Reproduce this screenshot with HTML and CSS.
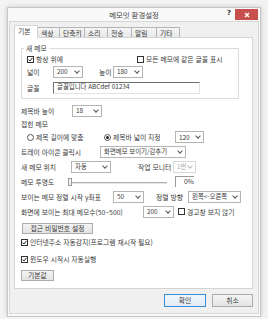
FILE: index.html
```html
<!DOCTYPE html>
<html lang="ko">
<head>
  <meta charset="UTF-8">
  <meta name="viewport" content="width=device-width, initial-scale=1.0">
  <title>메모잇 환경설정</title>
  <link rel="stylesheet" href="styles.css">
</head>
<body>
  <div class="window">
    <div class="titlebar">
      <span></span>
      <span class="title">메모잇 환경설정</span>
      <div class="controls">
        <span class="help">?</span>
        <span class="close">
          <svg width="6" height="6" viewBox="0 0 6 6"><path d="M1 1L5 5M5 1L1 5" stroke="#fff" stroke-width="1.4"/></svg>
        </span>
      </div>
    </div>

    <div class="client">
      <div class="tabs">
        <span class="tab active">기본</span>
        <span class="tab t-color">색상</span>
        <span class="tab t-key">단축키</span>
        <span class="tab t-sound">소리</span>
        <span class="tab t-send">전송</span>
        <span class="tab t-alarm">알림</span>
        <span class="tab t-etc">기타</span>
      </div>

      <div class="panel">
        <fieldset class="group">
          <legend>새 메모</legend>
          <div class="frow">
            <label class="check ontop"><span class="box checked"><svg width="5" height="5" viewBox="0 0 5 5"><path d="M0.5 2.6L1.9 4L4.5 0.8" fill="none" stroke="#222" stroke-width="1"/></svg></span>항상 위에</label>
            <label class="check"><span class="box"></span>모든 메모에 같은 글꼴 표시</label>
          </div>
          <div class="frow size">
            <span class="lbl l-width">넓이</span>
            <span class="combo c30">200<i class="arrow"></i></span>
            <span class="lbl l-height">높이</span>
            <span class="combo c30">180<i class="arrow"></i></span>
          </div>
          <div class="frow font">
            <span class="lbl l-width">글꼴</span>
            <span class="field">글꼴입니다 ABCdef 01234</span>
          </div>
        </fieldset>

        <div class="row">
          <span class="lbl l-title">제목바 높이</span>
          <span class="combo c30">18<i class="arrow"></i></span>
        </div>
        <div class="row h12">
          <span class="lbl">접힌 메모</span>
        </div>
        <div class="row h14">
          <label class="radio r-fit"><span class="dot"></span>제목 길이에 맞춤</label>
          <label class="radio r-fix"><span class="dot on"></span>제목바 넓이 지정</label>
          <span class="combo c29">120<i class="arrow"></i></span>
        </div>
        <div class="row">
          <span class="lbl l-tray">트레이 아이콘 클릭시</span>
          <span class="combo c86">화면메모 보이기/감추기<i class="arrow"></i></span>
        </div>
        <div class="row">
          <span class="lbl l-pos">새 메모 위치</span>
          <span class="combo c40">자동<i class="arrow"></i></span>
          <span class="lbl l-monitor">작업 모니터</span>
          <span class="combo c23 disabled">1번<i class="arrow"></i></span>
        </div>
        <div class="row">
          <span class="lbl l-alpha">메모 투명도</span>
          <div class="slider"><span class="thumb"></span><span class="track"></span></div>
          <span class="percent">0%</span>
        </div>
        <div class="row">
          <span class="lbl l-sort">보이는 메모 정렬 시작 y좌표</span>
          <span class="combo c31">50<i class="arrow"></i></span>
          <span class="lbl l-dir">정렬 방향</span>
          <span class="combo c53">왼쪽&lt;-오른쪽<i class="arrow"></i></span>
        </div>
        <div class="row">
          <span class="lbl l-max">화면에 보이는 최대 메모수(50~500)</span>
          <span class="combo c31">200<i class="arrow"></i></span>
          <label class="check warn"><span class="box"></span>경고창 보지 않기</label>
        </div>
        <div class="row h13 spaced">
          <button class="btn b-pass">접근 비밀번호 설정</button>
        </div>
        <div class="row h14">
          <label class="check"><span class="box checked"><svg width="5" height="5" viewBox="0 0 5 5"><path d="M0.5 2.6L1.9 4L4.5 0.8" fill="none" stroke="#222" stroke-width="1"/></svg></span>인터넷주소 자동감지(프로그램 재시작 필요)</label>
        </div>
        <div class="row h14 spaced">
          <label class="check"><span class="box checked"><svg width="5" height="5" viewBox="0 0 5 5"><path d="M0.5 2.6L1.9 4L4.5 0.8" fill="none" stroke="#222" stroke-width="1"/></svg></span>윈도우 시작시 자동실행</label>
        </div>
        <div class="row h12 spaced">
          <button class="btn b-default">기본값</button>
        </div>
      </div>

      <div class="actions">
        <button class="btn ok">확인</button>
        <button class="btn cancel">취소</button>
      </div>
    </div>
  </div>
</body>
</html>
```

FILE: styles.css
```css
* {
  box-sizing: border-box;
}
body {
  margin: 0;
  background-color: #f3f3f3;
  font-family: "Noto Sans CJK KR", "Noto Sans", sans-serif;
  font-size: 6.8px;
  color: #3a3a3a;
}
.window {
  width: 254px;
  height: 310px;
  margin: 7px 0 0 7px;
  background-color: #f9f9f9;
  border: 1px solid #c6c6c6;
  box-shadow: 0 0 5px rgba(0, 0, 0, 0.18);
  display: flex;
  flex-direction: column;
}
.titlebar {
  height: 13px;
  display: grid;
  grid-template-columns: 1fr auto 1fr;
  align-items: center;
}
.title {
  font-size: 7.4px;
  line-height: 13px;
  color: #444;
}
.controls {
  display: flex;
  justify-content: flex-end;
  align-self: start;
  margin-right: 2px;
}
.help {
  font-family: "DejaVu Sans", sans-serif;
  font-weight: bold;
  font-size: 7px;
  line-height: 9px;
  margin: 1px 4px 0 0;
  color: #333;
}
.close {
  width: 23px;
  height: 11px;
  margin-top: 1px;
  background-color: #c7504f;
  display: flex;
  align-items: center;
  justify-content: center;
}

.client {
  flex: 1;
  margin: 0 1px 2px;
  background-color: #f0f0f0;
  border: 1px solid #d7d7d7;
  padding: 3px 5px 6px 4px;
  display: flex;
  flex-direction: column;
}
.tabs {
  display: flex;
  align-items: flex-end;
  height: 13px;
  margin-bottom: -1px;
}
.tab {
  height: 11px;
  line-height: 10px;
  padding-left: 3px;
  border: 1px solid #b5b5b5;
  border-left: none;
  background: linear-gradient(#f5f5f5, #e8e8e8);
}
.tab.active {
  height: 13px;
  width: 24px;
  line-height: 11px;
  background: #fff;
  border: 1px solid #d5d5d5;
  border-bottom: none;
  position: relative;
  z-index: 1;
}
.t-color { width: 22px; }
.t-key { width: 25px; }
.t-sound { width: 23px; }
.t-send { width: 24px; }
.t-alarm { width: 25px; }
.t-etc { width: 23px; }

.panel {
  flex: 1;
  background-color: #fff;
  border: 1px solid #d5d5d5;
  padding: 6px 0 0 6px;
  display: flex;
  flex-direction: column;
}
.group {
  width: 218px;
  margin: 0 0 4px 0;
  padding: 0 5px 4px 5px;
  border: 1px solid #dcdcdc;
}
.group legend {
  padding: 0 2px;
  margin-left: -3px;
  line-height: 9px;
}
.frow {
  height: 12px;
  display: flex;
  align-items: center;
}
.frow.size {
  height: 13px;
}
.frow.font {
  margin-top: 4px;
}
.row {
  height: 15px;
  display: flex;
  align-items: center;
}
.row.h12 { height: 12px; }
.row.h13 { height: 13px; }
.row.h14 { height: 14px; }
.row.spaced { margin-top: 3px; }

.lbl {
  white-space: nowrap;
}
.l-width { width: 26px; }
.l-height { width: 14px; margin-left: 16px; }
.l-title { width: 51px; }
.l-tray { width: 79px; }
.l-pos { width: 50px; }
.l-monitor { width: 35px; margin-left: 27px; }
.l-alpha { width: 47px; }
.l-sort { width: 92px; }
.l-dir { width: 32px; margin-left: 12px; }
.l-max { width: 122px; }

.check, .radio {
  display: flex;
  align-items: center;
  white-space: nowrap;
}
.ontop { width: 110px; }
.warn { margin-left: 4px; }
.box {
  width: 7px;
  height: 7px;
  margin-right: 2px;
  border: 1px solid #333;
  background-color: #fff;
  display: flex;
  align-items: center;
  justify-content: center;
}
.radio.r-fit { width: 77px; margin-left: 6px; }
.radio.r-fix { width: 71px; }
.dot {
  width: 7px;
  height: 7px;
  margin-right: 2px;
  border: 1px solid #555;
  border-radius: 50%;
  display: flex;
  align-items: center;
  justify-content: center;
}
.dot.on::after {
  content: "";
  width: 3px;
  height: 3px;
  border-radius: 50%;
  background-color: #222;
}

.combo {
  height: 12px;
  padding: 0 3px 0 3px;
  border: 1px solid #b4b4b4;
  background-color: #fff;
  display: flex;
  align-items: center;
  justify-content: space-between;
  white-space: nowrap;
  font-size: 6.4px;
}
.arrow {
  width: 4px;
  height: 4px;
  margin-bottom: 2px;
  border-right: 1px solid #555;
  border-bottom: 1px solid #555;
  transform: rotate(45deg);
}
.combo.disabled {
  color: #a8a8a8;
  border-color: #d9d9d9;
}
.combo.disabled .arrow {
  border-color: #bbb;
}
.c23 { width: 23px; }
.c29 { width: 29px; }
.c30 { width: 30px; }
.c31 { width: 31px; }
.c40 { width: 40px; }
.c53 { width: 53px; }
.c86 { width: 86px; }

.field {
  width: 147px;
  height: 12px;
  padding-left: 3px;
  line-height: 8px;
  font-size: 6.4px;
  border-top: 1px solid #707070;
  border-left: 1px solid #707070;
  border-right: 1px solid #e2e2e2;
  border-bottom: 1px solid #e2e2e2;
  white-space: nowrap;
}

.slider {
  width: 99px;
  height: 9px;
  display: flex;
  align-items: center;
}
.thumb {
  width: 4px;
  height: 8px;
  border: 1px solid #9a9a9a;
  background-color: #f4f4f4;
}
.track {
  flex: 1;
  height: 2px;
  margin-top: 3px;
  border-top: 1px solid #b0b0b0;
  border-bottom: 1px solid #e6e6e6;
}
.percent {
  width: 19px;
  height: 11px;
  margin-left: 8px;
  text-align: right;
  line-height: 8px;
  border-top: 1px solid #9a9a9a;
  border-left: 1px solid #9a9a9a;
}

.btn {
  height: 11px;
  padding: 0;
  border: 1px solid #acacac;
  background: linear-gradient(#f4f4f4, #e3e3e3);
  font-family: "Noto Sans CJK KR", "Noto Sans", sans-serif;
  font-size: 6.8px;
  line-height: 9px;
  color: #3a3a3a;
}
.b-pass { width: 71px; margin-left: 1px; }
.b-default { width: 33px; }

.actions {
  display: flex;
  justify-content: flex-end;
  gap: 6px;
  margin-top: 5px;
}
.actions .btn {
  height: 13px;
  width: 42px;
}
.actions .ok {
  border-color: #3c8fd6;
  background: linear-gradient(#f0f6fc, #e1ecf8);
}
.actions .cancel {
  width: 41px;
}
```
